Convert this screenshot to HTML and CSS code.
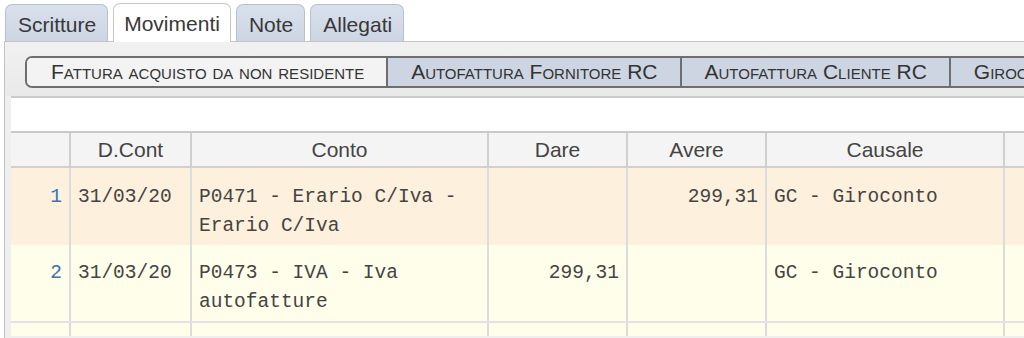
FILE: index.html
```html
<!DOCTYPE html>
<html lang="it">
<head>
  <meta charset="UTF-8" />
  <title>Movimenti</title>
  <link rel="stylesheet" href="styles.css">
</head>
<body>
  <div class="tabs">
    <div class="tab">Scritture</div>
    <div class="tab active">Movimenti</div>
    <div class="tab">Note</div>
    <div class="tab">Allegati</div>
  </div>

  <div class="panel">
    <div class="toolbar">
      <div class="btn-group">
        <button class="btn first">Fattura acquisto da non residente</button>
        <button class="btn">Autofattura Fornitore RC</button>
        <button class="btn">Autofattura Cliente RC</button>
        <button class="btn">Giroconto</button>
      </div>
    </div>

    <div class="grid-wrap">
      <div class="filter"></div>

      <div class="row head">
        <div class="cell"></div>
        <div class="cell">D.Cont</div>
        <div class="cell">Conto</div>
        <div class="cell">Dare</div>
        <div class="cell">Avere</div>
        <div class="cell">Causale</div>
        <div class="cell"></div>
      </div>

      <div class="row data odd">
        <div class="cell num idx">1</div>
        <div class="cell">31/03/20</div>
        <div class="cell">P0471 - Erario C/Iva - Erario C/Iva</div>
        <div class="cell num"></div>
        <div class="cell num">299,31</div>
        <div class="cell">GC - Giroconto</div>
        <div class="cell"></div>
      </div>

      <div class="row data even">
        <div class="cell num idx">2</div>
        <div class="cell">31/03/20</div>
        <div class="cell">P0473 - IVA - Iva autofatture</div>
        <div class="cell num">299,31</div>
        <div class="cell num"></div>
        <div class="cell">GC - Giroconto</div>
        <div class="cell"></div>
      </div>

      <div class="row data empty">
        <div class="cell"></div>
        <div class="cell"></div>
        <div class="cell"></div>
        <div class="cell"></div>
        <div class="cell"></div>
        <div class="cell"></div>
        <div class="cell"></div>
      </div>
    </div>
  </div>
</body>
</html>
```

FILE: styles.css
```css
:root {
  --cols: 60px 121px 297px 139px 139px 238px 220px;
  --text: #3d3d3d;
  --tab-border: #b8c0cf;
  --btn-border: #6e6e6e;
  --btn-bg: #cdd5e2;
  --line: #dcdcdc;
  --head-line: #c9c9c9;
}

* {
  box-sizing: border-box;
}

body {
  margin: 0;
  background: #fff;
  font-family: 'Liberation Sans', Arial, sans-serif;
  color: var(--text);
  overflow: hidden;
}

/* tabs */
.tabs {
  display: flex;
  align-items: flex-end;
  gap: 5px;
  padding: 3px 0 0 5px;
}

.tab {
  height: 37px;
  padding: 3px 11px 0 12px;
  line-height: 34px;
  font-size: 21px;
  color: #383838;
  background: linear-gradient(#dae0ec, #cdd5e4);
  border: 1px solid var(--tab-border);
  border-bottom: none;
  border-radius: 7px 7px 0 0;
}

.tab.active {
  position: relative;
  z-index: 1;
  height: 39px;
  margin-bottom: -1px;
  padding: 3px 10px 0 10px;
  background: #fff;
  border-color: #c6c6c6;
}

/* panel */
.panel {
  margin-left: 4px;
  border-top: 1px solid #c4c4c4;
  border-left: 1px solid #c2c2c2;
  background: #efefef;
  height: 300px;
}

.toolbar {
  background: linear-gradient(#f1f1f1, #e9e9e9);
  padding: 14px 0 8px 20px;
  overflow: hidden;
}

.btn-group {
  display: flex;
  width: max-content;
  border: 2px solid var(--btn-border);
  border-radius: 7px 0 0 7px;
}

.btn {
  height: 28px;
  padding: 0 22px 0 23px;
  border: none;
  border-left: 2px solid var(--btn-border);
  background: var(--btn-bg);
  font-family: 'Liberation Sans', Arial, sans-serif;
  font-size: 21px;
  font-variant: small-caps;
  color: #333;
  line-height: 28px;
  white-space: nowrap;
}

.btn.first {
  border-left: none;
  padding: 0 22px 0 24px;
  border-radius: 5px 0 0 5px;
  background: #f3f3f3;
}

/* grid */
.grid-wrap {
  margin-left: 6px;
  border-top: 2px solid #cbcbcb;
  background: #fff;
  height: 240px;
  overflow: hidden;
}

.filter {
  height: 33px;
  background: #fff;
}

.row {
  display: grid;
  grid-template-columns: var(--cols);
  width: max-content;
}

.cell {
  border-right: 2px solid var(--line);
  padding: 15px 7px 0 7px;
}

.head {
  background: #f4f4f4;
  border-top: 2px solid var(--head-line);
  border-bottom: 2px solid #d0d0d0;
}

.head .cell {
  height: 33px;
  padding: 0 7px;
  border-right-color: #cfcfcf;
  text-align: center;
  font-size: 21px;
  line-height: 33px;
  color: #444;
}

.data .cell {
  font-family: 'Liberation Mono', 'Courier New', monospace;
  font-size: 19.5px;
  line-height: 29px;
  color: #444;
}

.num {
  text-align: right;
}

.data .idx {
  color: #3d71b3;
}

.odd {
  background: #fdf0dc;
  height: 77px;
}

.even {
  background: #fefeea;
  height: 78px;
  border-bottom: 2px solid #e2e2e2;
}

.even .cell {
  padding-top: 14px;
}

.empty {
  background: #fefeea;
  height: 40px;
}
```
